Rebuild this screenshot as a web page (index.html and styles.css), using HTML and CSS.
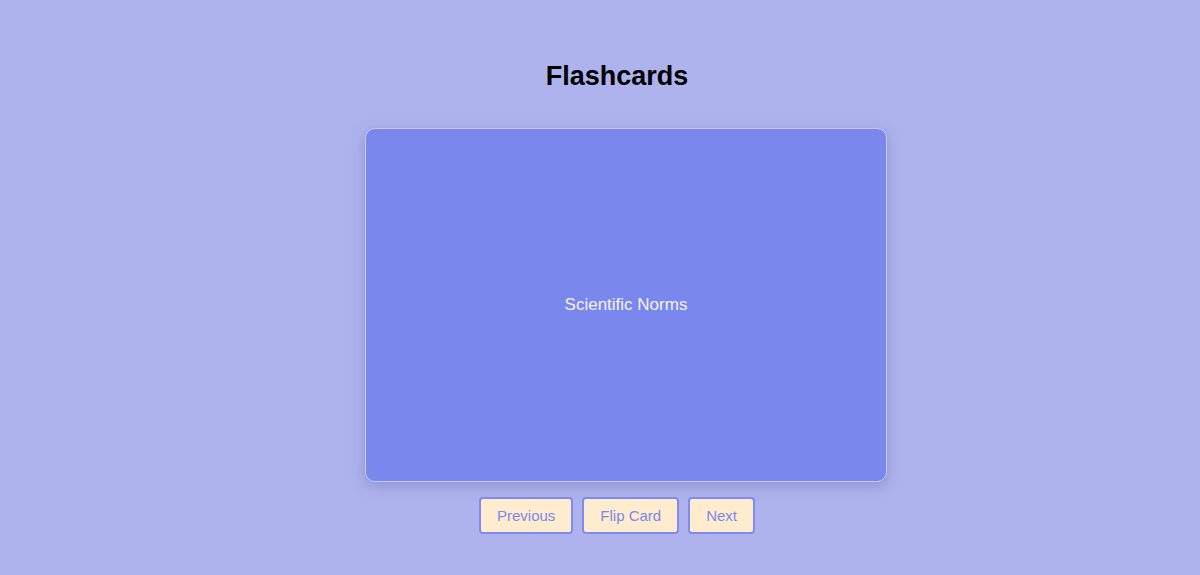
FILE: index.html
```html
<!DOCTYPE html>
<html>
<head>
<meta charset="utf-8">
<link rel="stylesheet" href="styles.css">
</head>
<body>
<main class="app">
  <h1 class="title">Flashcards</h1>
  <div class="card">
    <span class="card-text">Scientific Norms</span>
  </div>
  <div class="controls">
    <button class="btn">Previous</button>
    <button class="btn">Flip Card</button>
    <button class="btn">Next</button>
  </div>
</main>
</body>
</html>
```

FILE: styles.css
```css
html, body {
  margin: 0;
  padding: 0;
  height: 100%;
}
body {
  background: #aeb3ed;
  font-family: "Liberation Sans", Arial, sans-serif;
  padding-left: 34px;
  box-sizing: border-box;
}
.app {
  display: flex;
  flex-direction: column;
  align-items: center;
  padding-top: 61px;
}
.title {
  margin: 0;
  font-size: 27px;
  line-height: 31px;
  font-weight: bold;
  color: #000;
}
.card {
  margin-top: 36px;
  margin-left: 18px;
  width: 520px;
  height: 352px;
  background: #7a88ed;
  border: 1px solid #c5caf2;
  border-radius: 10px;
  box-shadow: 0 4px 14px rgba(80, 90, 160, 0.35);
  display: flex;
  align-items: center;
  justify-content: center;
}
.card-text {
  color: #f2f3ff;
  font-size: 17px;
}
.controls {
  margin-top: 15px;
  display: flex;
  gap: 9px;
}
.btn {
  font-family: "Liberation Sans", Arial, sans-serif;
  font-size: 15px;
  line-height: 17px;
  padding: 8px 16px;
  background: #ffebcd;
  color: #7a88ed;
  border: 2px solid #7f8cee;
  border-radius: 4px;
}
```
